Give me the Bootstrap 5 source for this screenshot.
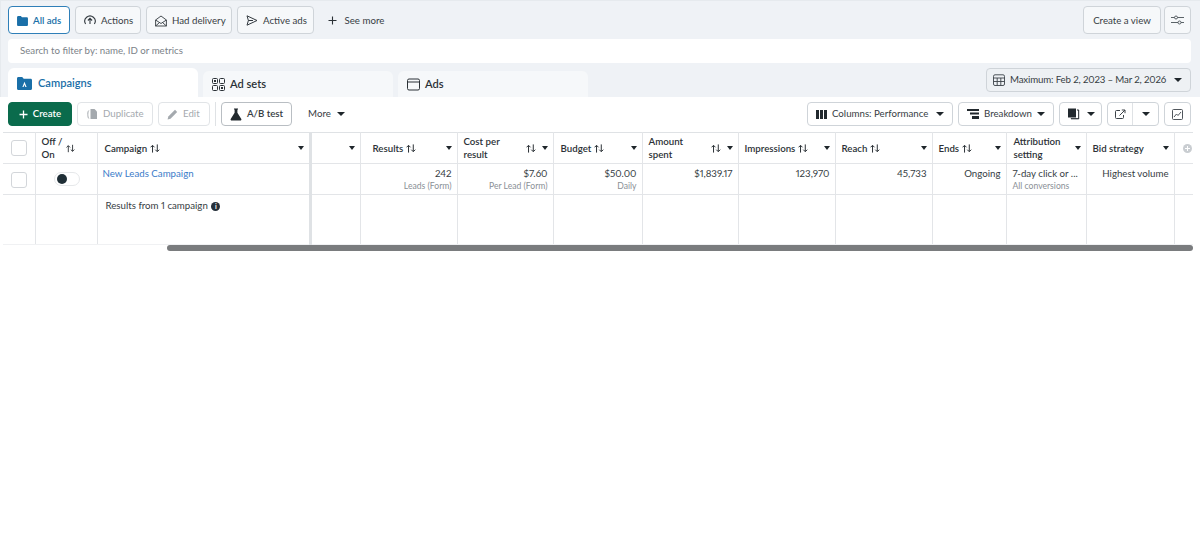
<!DOCTYPE html>
<html lang="en"><head><meta charset="utf-8"><title>Ads Manager</title>
<link href="https://cdn.jsdelivr.net/npm/bootstrap@5.3.0/dist/css/bootstrap.min.css" rel="stylesheet">
<style>
html,body{height:554px;overflow:hidden}
body{background:#fff;font-family:Lato,"Liberation Sans",sans-serif;font-size:9.7px;color:#2b3136;font-variant-numeric:proportional-nums}
.topzone{background:#eff2f6;padding:5px 9px 0 7px;height:97px;border-top:1px solid #e6eaee;border-left:1px solid #e6eaee}
.chip,.tool{display:inline-flex;align-items:center;gap:5px;background:#fff;border:1px solid #cfd4d9;border-radius:4px;color:#363d43;font-size:9.7px;white-space:nowrap;padding:0 8px;line-height:1}
.chip{height:28px;background:#f6f8fa;padding-top:1px}
.chip svg,.tool svg{flex:none}
.chip-on{background:#fff;border-color:#2f7fb8;color:#1a6fa8;font-weight:600}
.chip-plain{background:transparent;border-color:transparent}
.gap5{gap:5px}
.w-all{width:62px}.w-act{width:66px}.w-had{width:86px}.w-active{width:77px}.w-view{width:78px;justify-content:center;margin-right:-2px}.w-tune{width:27px;justify-content:center;padding:0}
.filterbox{height:24px;background:#fff;border-radius:4px;margin-top:5px;padding:0 12px 1px;color:#7b8288;font-size:9.7px;display:flex;align-items:center}
.tabrow{margin-top:5px;height:29px}
.tabx{width:190px;background:#f6f8fa;border-radius:6px 6px 0 0;margin-top:3px;display:flex;align-items:center;gap:5px;padding:0 9px;font-size:11.100px;font-weight:600;color:#2b3136}
.tabx-on{background:#fff;margin-top:0;color:#1a6fa8;gap:6px;padding-top:1px}
.datebtn{width:205px;height:23px;background:#eef1f4;padding:0 8px 0 6px;border-color:#cfd4d9;gap:5px}
.datetxt{letter-spacing:-.15px;flex-grow:1}
.toolbar{height:35px;padding:5px 9px 0 8px;gap:5px}
.tool{height:24px}
.tool-create{width:64px;background:#0a6b4c;border-color:#0a6b4c;color:#fff;font-weight:600;justify-content:center}
.tool-off{color:#a4a9ae;background:#fff;border-color:#e1e4e7}
.w-dup{width:76px}.w-edit{width:52px}.w-ab{width:71px;font-weight:600;justify-content:center;border-color:#b9bec3}
.w-more{width:59px;border-color:transparent;justify-content:center;gap:6px}
.w-col{width:146px}.w-bd{width:96px}.w-lib{width:43px;gap:7px}.w-split{width:52px;padding:0;gap:0}.w-trend{width:27px;padding:0;justify-content:center}
.split-a{width:25px;height:100%;border-right:1px solid #dfe2e5}.split-b{flex:1}
.sep{width:1px;height:24px;background:#dfe2e5}
.caret{width:0;height:0;border-left:4px solid transparent;border-right:4px solid transparent;border-top:4.5px solid #1f262b;flex:none}
.ms-push{margin-left:auto}
.gridwrap{position:relative;height:123px;padding-left:3px}
.adtable{table-layout:fixed;width:1190px;margin:0;border-collapse:collapse;font-size:9.7px;color:#363d43;--bs-table-bg:transparent}
.adtable th,.adtable td{padding:0 5px 0 6px;border:1px solid #e3e5e8;vertical-align:top;line-height:13px;font-weight:400;white-space:nowrap;overflow:hidden}
.adtable th{height:31px;vertical-align:middle;font-weight:600;color:#2b3136;border-top:1px solid #dfe2e5}
.adtable tbody tr.rowa td{height:31px;padding-top:3px}
.adtable tbody tr.rowb td{height:50px;border-bottom-color:#f0f1f3}
.adtable tr>*:first-child{border-left:0}
.adtable tr>*:last-child{border-right:0}
.hd{display:flex;align-items:center;gap:4px;justify-content:space-between}
.hd .lbl{display:flex;align-items:center;gap:3px}
.hd .carets{display:flex;align-items:center;gap:6px;flex:none}
.caret-s{border-left-width:3.5px;border-right-width:3.5px;border-top-width:4px}
.subt{font-size:8.600px;color:#8a9096;line-height:12px}
.num{text-align:right}
.box{display:block;width:16px;height:16px;border:1px solid #d3d6da;border-radius:3px;background:#fff}
.box-row{margin-top:5px}
.tog{display:block;width:26px;height:14px;border:1px solid #e6e8ea;border-radius:8px;margin:5px auto 0;padding:1px 0 0 2px}
.tog i{display:block;width:10px;height:10px;border-radius:50%;background:#1f2e36}
.camp{color:#3b7cc9;padding-left:5px!important}
.divcol{border-right:3px solid #dfe2e5!important}
.res-h{padding-left:12px!important}
.pad7{padding-left:7px!important}
.c0{width:32px}.c1{width:62px}.c2{width:213px}.c3{width:50px}.c4{width:97px}.c5{width:96px}.c6{width:89px}.c7{width:96px}.c8{width:97px}.c9{width:97px}.c10{width:74px}.c11{width:80px}.c12{width:88px}.c13{width:19px}
.sum{padding:4px 0 0 8px!important}
.scrollthumb{position:absolute;left:167px;top:113px;width:1026px;height:6px;border-radius:3px;background:#7a7c7e}
.infodot{display:inline-block;width:9px;height:9px;border-radius:50%;background:#26303a;color:#fff;font-size:7px;font-weight:700;line-height:9px;text-align:center;margin-left:1px}
</style></head><body>
<svg width="0" height="0" class="d-none"><defs><symbol id="ud" viewBox="0 0 11 9"><path d="M2.800 9V1.200M.6 3.200 2.800 1 5 3.200M8 0v7.800M5.800 5.800 8 8l2.200-2.200" fill="none" stroke="#2b3136" stroke-width="1.100"/></symbol></defs></svg>
<div class="topzone">
  <div class="d-flex align-items-center gap5">
    <span class="chip chip-on w-all"><svg width="11" height="10" viewBox="0 0 12 11"><path d="M0 1.500C0 .7.600 0 1.400 0h2.800l1.200 1.500h5.200c.8 0 1.400.6 1.400 1.400v6.600c0 .8-.6 1.500-1.400 1.500H1.400C.6 11 0 10.300 0 9.500z" fill="#1a6fa8"/></svg>All ads</span>
    <span class="chip w-act"><svg width="12" height="12" viewBox="0 0 12 12" fill="none" stroke="#333a40" stroke-width="1.100"><path d="M1.600 9A5.200 5.200 0 1 1 10.400 9"/><path d="M6 9V3.500M3.900 5.500 6 3.400l2.100 2.100"/></svg>Actions</span>
    <span class="chip w-had"><svg width="12" height="12" viewBox="0 0 12 12" fill="none" stroke="#333a40" stroke-width=".9"><path d="M.6 5 6 1l5.400 4v6H.6z"/><path d="M.6 5 6 8.500 11.400 5M.6 11 4.500 7.500M11.400 11 7.500 7.500"/></svg>Had delivery</span>
    <span class="chip w-active"><svg width="12" height="11" viewBox="0 0 12 11" fill="none" stroke="#333a40" stroke-width="1"><path d="M1 .8 11 5.500 1 10.200 2.400 5.500zM2.400 5.500H7"/></svg>Active ads</span>
    <span class="chip chip-plain"><svg width="9" height="9" viewBox="0 0 9 9" stroke="#2b3136" stroke-width="1.100"><path d="M4.500.5v8M.5 4.500h8"/></svg>&nbsp;See more</span>
    <span class="chip w-view ms-push">Create a view</span>
    <span class="chip w-tune"><svg width="13" height="10" viewBox="0 0 13 10" fill="none" stroke="#4a5157" stroke-width=".9"><path d="M0 2.500h3.500M6.500 2.500H13M0 7.500h7M10 7.500h3"/><circle cx="5" cy="2.500" r="1.500"/><circle cx="8.500" cy="7.500" r="1.500"/></svg></span>
  </div>
  <div class="filterbox">Search to filter by: name, ID or metrics</div>
  <div class="tabrow d-flex gap5">
    <div class="tabx tabx-on"><svg width="15" height="13" viewBox="0 0 15 13"><path d="M0 1.500C0 .7.600 0 1.400 0h3.800l1.500 1.700h6.900c.8 0 1.400.6 1.400 1.400v8.400c0 .8-.6 1.500-1.400 1.500H1.400C.6 13 0 12.300 0 11.500z" fill="#1a6fa8"/><path d="M7.500 4.800 5.400 10h1.200l.9-2.300.9 2.300h1.200z" fill="#fff"/></svg>Campaigns</div>
    <div class="tabx"><svg width="13" height="13" viewBox="0 0 13 13" fill="none" stroke="#2b3136" stroke-width="1"><rect x=".5" y=".5" width="5" height="5" rx="1"/><rect x="7.500" y=".5" width="5" height="5" rx="1"/><rect x=".5" y="7.500" width="5" height="5" rx="1"/><rect x="7.500" y="7.500" width="5" height="5" rx="1"/><path d="M2 2h2v2H2zM9 9h2v2H9z" fill="#2b3136" stroke="none"/></svg>Ad sets</div>
    <div class="tabx"><svg width="13" height="13" viewBox="0 0 13 13" fill="none" stroke="#2b3136" stroke-width="1"><rect x=".5" y="1" width="12" height="11" rx="1.500"/><path d="M.5 4h12"/></svg>Ads</div>
    <span class="tool datebtn ms-push"><svg width="12" height="12" viewBox="0 0 12 12" fill="none" stroke="#3c4349" stroke-width=".9"><rect x=".5" y=".8" width="11" height="10.700" rx="1.500"/><path d="M.5 4h11M.5 7.500h11M4.200 4v7.500M7.800 4v7.500"/></svg><span class="datetxt">Maximum: Feb 2, 2023 – Mar 2, 2026</span><i class="caret"></i></span>
  </div>
</div>
<div class="toolbar d-flex">
  <span class="tool tool-create"><svg width="9" height="9" viewBox="0 0 9 9" stroke="#fff" stroke-width="1.300"><path d="M4.500.5v8M.5 4.500h8"/></svg>Create</span>
  <span class="tool tool-off w-dup"><svg width="12" height="12" viewBox="0 0 12 12" fill="#a4a9ae"><path d="M4.500 1h4L11 3.500V11H4.500z"/><path d="M2.800 2.500C1.500 3 1.500 9.500 2.800 10.500" fill="none" stroke="#a4a9ae" stroke-width="1"/></svg>Duplicate</span>
  <span class="tool tool-off w-edit"><svg width="11" height="11" viewBox="0 0 11 11" fill="#a4a9ae"><path d="M8 .8 10.200 3 3.500 9.700.6 10.400 1.300 7.500z"/></svg>Edit</span>
  <span class="sep"></span>
  <span class="tool w-ab"><svg width="12" height="13" viewBox="0 0 12 13" fill="#22292e"><path d="M4 .5h4v1H7.400v3.300L11.300 11c.4.8-.1 1.500-1 1.500H1.700c-.9 0-1.400-.7-1-1.500L4.600 4.800V1.500H4z"/></svg>A/B test</span>
  <span class="tool w-more bg-transparent">More<i class="caret"></i></span>
  <span class="tool w-col ms-push"><svg width="11" height="9" viewBox="0 0 11 9" fill="#22292e"><path d="M0 0h3v9H0zM4 0h3v9H4zM8 0h3v9H8z"/></svg><span class="flex-grow-1">Columns: Performance</span><i class="caret"></i></span>
  <span class="tool w-bd"><svg width="12" height="10" viewBox="0 0 12 10" fill="#22292e"><path d="M0 0h12v2H0zM3 3.500h9v2H3zM5 7h7v3H5z"/></svg><span class="flex-grow-1">Breakdown</span><i class="caret"></i></span>
  <span class="tool w-lib"><svg width="12" height="12" viewBox="0 0 12 12" fill="#22292e"><path d="M0 .5h8v9H0z"/><path d="M9 2h1.500v8.500H3V11h7.800V2z" stroke="#22292e" stroke-width=".6"/></svg><i class="caret"></i></span>
  <span class="tool w-split"><span class="split-a d-flex align-items-center justify-content-center"><svg width="11" height="11" viewBox="0 0 11 11" fill="none" stroke="#3c4349" stroke-width="1"><path d="M5 1.500H1.500a1 1 0 0 0-1 1v6a1 1 0 0 0 1 1h6a1 1 0 0 0 1-1V6M4.500 6.500 10 1M6.800 1H10v3.200"/></svg></span><span class="split-b d-flex align-items-center justify-content-center"><i class="caret"></i></span></span>
  <span class="tool w-trend"><svg width="11" height="11" viewBox="0 0 11 11" fill="none" stroke="#3c4349" stroke-width=".9"><rect x=".5" y=".5" width="10" height="10" rx="1"/><path d="M2 8 4.500 5 6 6.500 9 3"/></svg></span>
</div>
<div class="gridwrap">
<table class="table adtable">
  <colgroup><col class="c0"><col class="c1"><col class="c2"><col class="c3"><col class="c4"><col class="c5"><col class="c6"><col class="c7"><col class="c8"><col class="c9"><col class="c10"><col class="c11"><col class="c12"><col class="c13"></colgroup>
  <thead><tr>
    <th class="ps-2 pe-0"><span class="box"></span></th>
    <th><div class="hd"><span>Off /<br>On</span><svg class="me-3" width="10" height="9"><use href="#ud"/></svg></div></th>
    <th class="divcol pad7"><div class="hd"><span class="lbl">Campaign <svg width="10" height="9"><use href="#ud"/></svg></span><i class="caret caret-s"></i></div></th>
    <th><div class="hd justify-content-end"><i class="caret caret-s"></i></div></th>
    <th class="res-h"><div class="hd"><span class="lbl">Results <svg width="10" height="9"><use href="#ud"/></svg></span><i class="caret caret-s"></i></div></th>
    <th><div class="hd"><span>Cost per<br>result</span><span class="carets"><svg width="10" height="9"><use href="#ud"/></svg><i class="caret caret-s"></i></span></div></th>
    <th class="pad7"><div class="hd"><span class="lbl">Budget <svg width="10" height="9"><use href="#ud"/></svg></span><i class="caret caret-s"></i></div></th>
    <th><div class="hd"><span>Amount<br>spent</span><span class="carets"><svg width="10" height="9"><use href="#ud"/></svg><i class="caret caret-s"></i></span></div></th>
    <th><div class="hd"><span class="lbl">Impressions <svg width="10" height="9"><use href="#ud"/></svg></span><i class="caret caret-s"></i></div></th>
    <th><div class="hd"><span class="lbl">Reach <svg width="10" height="9"><use href="#ud"/></svg></span><i class="caret caret-s"></i></div></th>
    <th><div class="hd"><span class="lbl">Ends <svg width="10" height="9"><use href="#ud"/></svg></span><i class="caret caret-s"></i></div></th>
    <th class="pad7"><div class="hd"><span>Attribution<br>setting</span><i class="caret caret-s"></i></div></th>
    <th><div class="hd"><span>Bid strategy</span><i class="caret caret-s"></i></div></th>
    <th class="px-1"><svg class="d-block ms-1" width="9" height="9" viewBox="0 0 9 9"><circle cx="4.500" cy="4.500" r="4.500" fill="#c9cdd1"/><path d="M4.500 2v5M2 4.500h5" stroke="#fff" stroke-width="1"/></svg></th>
  </tr></thead>
  <tbody>
    <tr class="rowa">
      <td class="ps-2 pe-0"><span class="box box-row"></span></td>
      <td><span class="tog"><i></i></span></td>
      <td class="camp divcol">New Leads Campaign</td>
      <td></td>
      <td class="num">242<div class="subt">Leads (Form)</div></td>
      <td class="num">$7.60<div class="subt">Per Lead (Form)</div></td>
      <td class="num">$50.00<div class="subt">Daily</div></td>
      <td class="num">$1,839.17</td>
      <td class="num">123,970</td>
      <td class="num">45,733</td>
      <td class="num">Ongoing</td>
      <td>7-day click or ...<div class="subt">All conversions</div></td>
      <td class="num">Highest volume</td>
      <td></td>
    </tr>
    <tr class="rowb">
      <td></td><td></td>
      <td class="sum divcol">Results from 1 campaign <span class="infodot">i</span></td>
      <td></td><td></td><td></td><td></td><td></td><td></td><td></td><td></td><td></td><td></td><td></td>
    </tr>
  </tbody>
</table>
<div class="scrollthumb"></div>
</div>
</body></html>
